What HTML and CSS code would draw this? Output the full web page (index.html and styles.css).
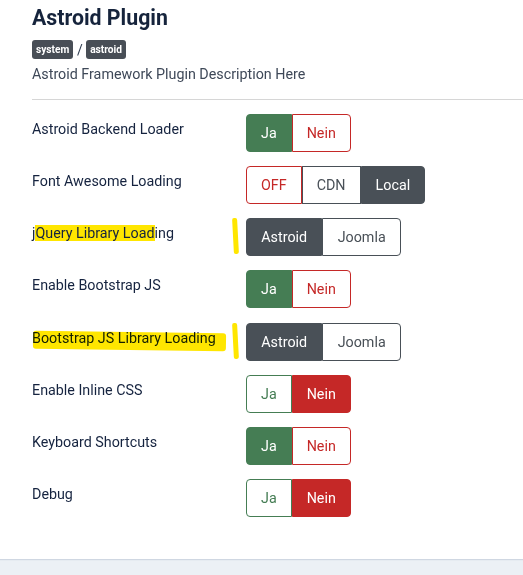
FILE: index.html
```html
<!DOCTYPE html>
<html lang="de">
<head>
<meta charset="utf-8">
<title>Astroid Plugin</title>
<link rel="stylesheet" href="styles.css">
</head>
<body>
<div class="card">
  <h1 class="title">Astroid Plugin</h1>
  <div class="badges"><span class="badge">system</span><span class="sep">/</span><span class="badge">astroid</span></div>
  <p class="desc">Astroid Framework Plugin Description Here</p>
  <hr class="rule">
  <div class="rows">
    <div class="row">
      <div class="label">Astroid Backend Loader</div>
      <div class="group"><span class="btn green-fill">Ja</span><span class="btn red-line">Nein</span></div>
    </div>
    <div class="row">
      <div class="label">Font Awesome Loading</div>
      <div class="group"><span class="btn red-line">OFF</span><span class="btn dark-line">CDN</span><span class="btn dark-fill">Local</span></div>
    </div>
    <div class="row">
      <div class="label mark-bar">j<span class="hl">Query Library Load</span>ing</div>
      <div class="group"><span class="btn dark-fill wide">Astroid</span><span class="btn dark-line wide">Joomla</span></div>
    </div>
    <div class="row">
      <div class="label">Enable Bootstrap JS</div>
      <div class="group"><span class="btn green-fill">Ja</span><span class="btn red-line">Nein</span></div>
    </div>
    <div class="row">
      <div class="label mark-bar mark-under">Bootstrap JS Library Loading</div>
      <div class="group"><span class="btn dark-fill wide">Astroid</span><span class="btn dark-line wide">Joomla</span></div>
    </div>
    <div class="row">
      <div class="label">Enable Inline CSS</div>
      <div class="group"><span class="btn green-line">Ja</span><span class="btn red-fill">Nein</span></div>
    </div>
    <div class="row">
      <div class="label">Keyboard Shortcuts</div>
      <div class="group"><span class="btn green-fill">Ja</span><span class="btn red-line">Nein</span></div>
    </div>
    <div class="row">
      <div class="label">Debug</div>
      <div class="group"><span class="btn green-line">Ja</span><span class="btn red-fill">Nein</span></div>
    </div>
  </div>
</div>
</body>
</html>
```
FILE: styles.css
```css
html, body {
  margin: 0;
  padding: 0;
}
body {
  background: #ecf0f5;
  font-family: Roboto, "Liberation Sans", Arial, sans-serif;
  color: #1c2b48;
  height: 575px;
  overflow: hidden;
}
.card {
  background: #fff;
  padding: 5px 0 42px 32px;
  box-shadow: 0 1px 1px rgba(120, 140, 170, 0.25);
}
.title {
  margin: 0;
  font-size: 21.3px;
  line-height: 25px;
  font-weight: 700;
  color: #16243c;
}
.badges {
  display: flex;
  align-items: center;
  margin-top: 10px;
  height: 19px;
}
.badge {
  background: #484e56;
  color: #fff;
  font-size: 10.2px;
  font-weight: 700;
  line-height: 13px;
  padding: 3px 4px;
  border-radius: 3px;
}
.sep {
  font-size: 14px;
  color: #2c3a4e;
  margin: 0 3.5px;
}
.desc {
  margin: 5px 0 0;
  font-size: 14.3px;
  line-height: 21px;
  color: #3e4858;
}
.rule {
  border: 0;
  border-top: 1px solid #d6d6d6;
  margin: 14px 0 14px;
  height: 0;
}
.rows {
  display: flex;
  flex-direction: column;
  gap: 14.15px;
}
.row {
  display: flex;
  align-items: flex-start;
}
.label {
  width: 214px;
  flex: none;
  font-size: 14.3px;
  line-height: 21px;
  padding-top: 5px;
  color: #15233f;
  position: relative;
}
.group {
  display: flex;
  height: 38px;
}
.btn {
  display: flex;
  align-items: center;
  justify-content: center;
  box-sizing: border-box;
  height: 38px;
  padding: 0 14px;
  font-size: 14.3px;
  border: 1px solid transparent;
}
.btn.wide {
  padding: 0 14.3px;
}
.btn:first-child {
  border-radius: 4px 0 0 4px;
}
.btn:last-child {
  border-radius: 0 4px 4px 0;
}
.green-fill {
  background: #457d54;
  border-color: #457d54;
  color: #fff;
}
.green-line {
  background: #fff;
  border-color: #457d54;
  color: #457d54;
}
.red-fill {
  background: #c52827;
  border-color: #c52827;
  color: #fff;
}
.red-line {
  background: #fff;
  border-color: #c52827;
  color: #c52827;
}
.dark-fill {
  background: #495057;
  border-color: #495057;
  color: #fff;
}
.dark-line {
  background: #fff;
  border-color: #495057;
  color: #495057;
}
.hl {
  background: #ffe600;
}
.mark-bar::after {
  content: "";
  position: absolute;
  left: 201px;
  top: 0;
  width: 5px;
  height: 36px;
  background: #ffe600;
  border-radius: 2px;
  transform: rotate(-3deg);
}
.mark-under::before {
  content: "";
  position: absolute;
  left: 1px;
  top: 9px;
  width: 193px;
  height: 18px;
  background: #ffe600;
  border-radius: 3px;
  transform: rotate(0.8deg);
  z-index: 0;
  mix-blend-mode: multiply;
}
```
